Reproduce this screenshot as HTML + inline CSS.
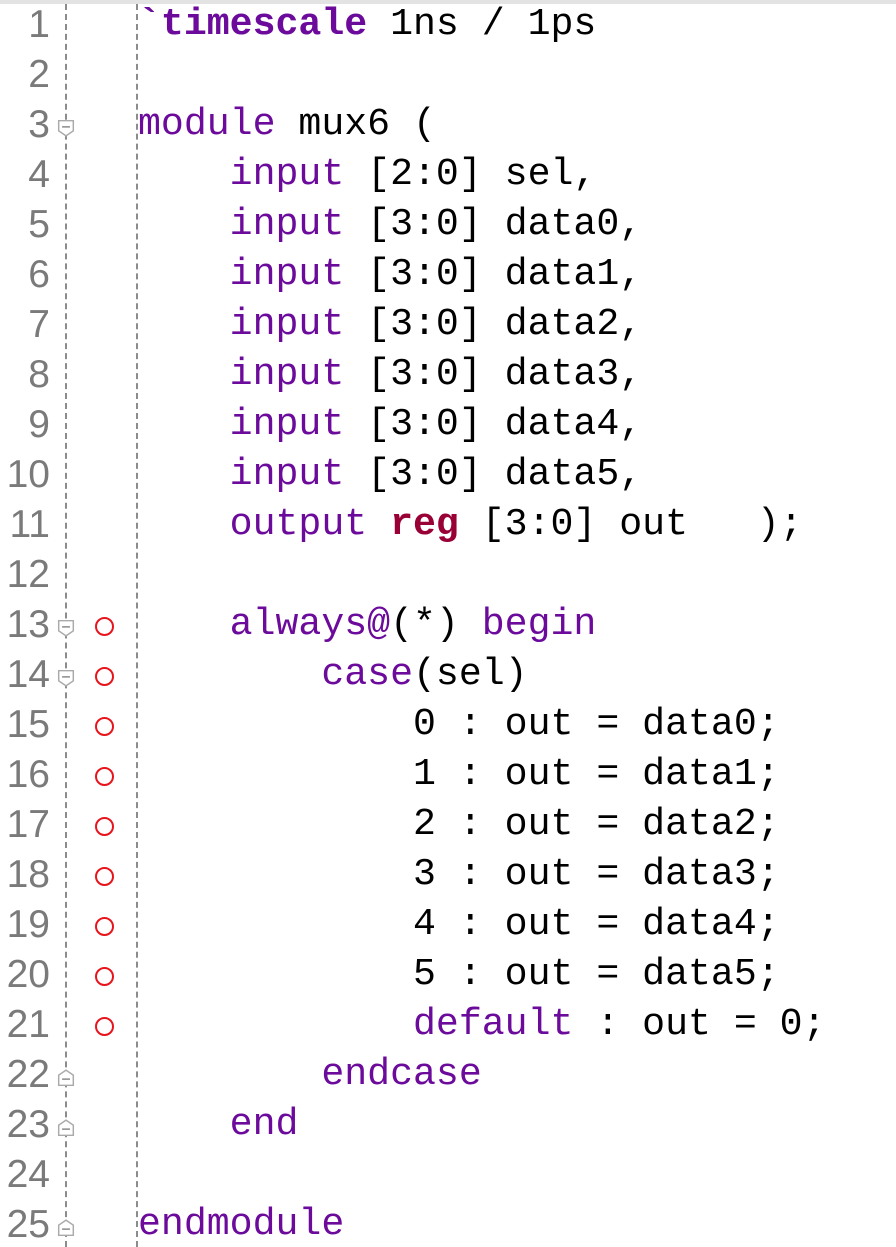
<!DOCTYPE html>
<html><head><meta charset="utf-8"><style>
html,body{margin:0;padding:0;background:#fff;width:896px;height:1247px;overflow:hidden;position:relative}
.top{position:absolute;left:0;top:0;width:896px;height:4px;background:#e3e3e3}
.vl{position:absolute;top:4px;height:1243px;width:0;border-left:2px dashed #8c8c8c}
.ln{position:absolute;left:0;width:50px;text-align:right;font-family:"Liberation Sans",sans-serif;font-size:39px;color:#7a7a7a;line-height:50px}
.code{position:absolute;left:138px;font-family:"Liberation Mono",monospace;font-size:38.2px;line-height:50px;white-space:pre;color:#000}
.k{color:#6b0a9b}
.r{color:#990036;font-weight:bold}
.b{font-weight:bold}
.bp{position:absolute;left:95px;width:19px;height:19px;border:2px solid #e8141c;border-radius:50%;box-sizing:border-box}
.fold{position:absolute;left:57px;width:18px;height:18px}
</style></head><body>
<div class="top"></div>
<div class="vl" style="left:65px"></div>
<div class="vl" style="left:136px"></div>
<div class="ln" style="top:0">1</div>
<div class="ln" style="top:50px">2</div>
<div class="ln" style="top:100px">3</div>
<div class="ln" style="top:150px">4</div>
<div class="ln" style="top:200px">5</div>
<div class="ln" style="top:250px">6</div>
<div class="ln" style="top:300px">7</div>
<div class="ln" style="top:350px">8</div>
<div class="ln" style="top:400px">9</div>
<div class="ln" style="top:450px">10</div>
<div class="ln" style="top:500px">11</div>
<div class="ln" style="top:550px">12</div>
<div class="ln" style="top:600px">13</div>
<div class="ln" style="top:650px">14</div>
<div class="ln" style="top:700px">15</div>
<div class="ln" style="top:750px">16</div>
<div class="ln" style="top:800px">17</div>
<div class="ln" style="top:850px">18</div>
<div class="ln" style="top:900px">19</div>
<div class="ln" style="top:950px">20</div>
<div class="ln" style="top:1000px">21</div>
<div class="ln" style="top:1050px">22</div>
<div class="ln" style="top:1100px">23</div>
<div class="ln" style="top:1150px">24</div>
<div class="ln" style="top:1200px">25</div>

<svg class="fold" style="top:119px" viewBox="0 0 16 16"><path d="M1.5 1.5h13v9l-6.5 4.5-6.5-4.5z" fill="#fff" stroke="#aaa" stroke-width="1.3"/><path d="M4.5 7h7" stroke="#888" stroke-width="1.3"/></svg>
<svg class="fold" style="top:619px" viewBox="0 0 16 16"><path d="M1.5 1.5h13v9l-6.5 4.5-6.5-4.5z" fill="#fff" stroke="#aaa" stroke-width="1.3"/><path d="M4.5 7h7" stroke="#888" stroke-width="1.3"/></svg>
<svg class="fold" style="top:669px" viewBox="0 0 16 16"><path d="M1.5 1.5h13v9l-6.5 4.5-6.5-4.5z" fill="#fff" stroke="#aaa" stroke-width="1.3"/><path d="M4.5 7h7" stroke="#888" stroke-width="1.3"/></svg>
<svg class="fold" style="top:1069px" viewBox="0 0 16 16"><path d="M1.5 14.5h13v-9l-6.5-4.5-6.5 4.5z" fill="#fff" stroke="#aaa" stroke-width="1.3"/><path d="M4.5 9h7" stroke="#888" stroke-width="1.3"/></svg>
<svg class="fold" style="top:1119px" viewBox="0 0 16 16"><path d="M1.5 14.5h13v-9l-6.5-4.5-6.5 4.5z" fill="#fff" stroke="#aaa" stroke-width="1.3"/><path d="M4.5 9h7" stroke="#888" stroke-width="1.3"/></svg>
<svg class="fold" style="top:1219px" viewBox="0 0 16 16"><path d="M1.5 14.5h13v-9l-6.5-4.5-6.5 4.5z" fill="#fff" stroke="#aaa" stroke-width="1.3"/><path d="M4.5 9h7" stroke="#888" stroke-width="1.3"/></svg>

<div class="bp" style="top:617px"></div>
<div class="bp" style="top:667px"></div>
<div class="bp" style="top:717px"></div>
<div class="bp" style="top:767px"></div>
<div class="bp" style="top:817px"></div>
<div class="bp" style="top:867px"></div>
<div class="bp" style="top:917px"></div>
<div class="bp" style="top:967px"></div>
<div class="bp" style="top:1017px"></div>

<div class="code" style="top:0"><span class="k b">`timescale</span> 1ns / 1ps</div>
<div class="code" style="top:100px"><span class="k">module</span> mux6 (</div>
<div class="code" style="top:150px">    <span class="k">input</span> [2:0] sel,</div>
<div class="code" style="top:200px">    <span class="k">input</span> [3:0] data0,</div>
<div class="code" style="top:250px">    <span class="k">input</span> [3:0] data1,</div>
<div class="code" style="top:300px">    <span class="k">input</span> [3:0] data2,</div>
<div class="code" style="top:350px">    <span class="k">input</span> [3:0] data3,</div>
<div class="code" style="top:400px">    <span class="k">input</span> [3:0] data4,</div>
<div class="code" style="top:450px">    <span class="k">input</span> [3:0] data5,</div>
<div class="code" style="top:500px">    <span class="k">output</span> <span class="r">reg</span> [3:0] out   );</div>
<div class="code" style="top:600px">    <span class="k">always@</span>(*) <span class="k">begin</span></div>
<div class="code" style="top:650px">        <span class="k">case</span>(sel)</div>
<div class="code" style="top:700px">            0 : out = data0;</div>
<div class="code" style="top:750px">            1 : out = data1;</div>
<div class="code" style="top:800px">            2 : out = data2;</div>
<div class="code" style="top:850px">            3 : out = data3;</div>
<div class="code" style="top:900px">            4 : out = data4;</div>
<div class="code" style="top:950px">            5 : out = data5;</div>
<div class="code" style="top:1000px">            <span class="k">default</span> : out = 0;</div>
<div class="code" style="top:1050px">        <span class="k">endcase</span></div>
<div class="code" style="top:1100px">    <span class="k">end</span></div>
<div class="code" style="top:1200px"><span class="k">endmodule</span></div>
</body></html>
